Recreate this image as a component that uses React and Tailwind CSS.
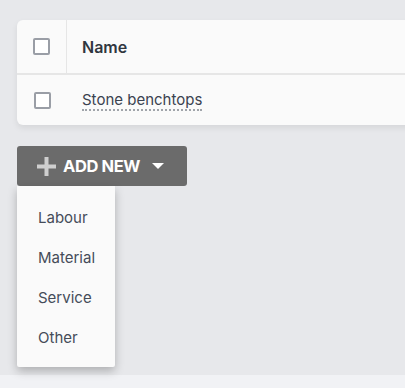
import React from 'react'

function Checkbox() {
  return <span className="block w-[17px] h-[17px] border-2 border-[#9a9ea6] rounded-[2px] bg-white" />
}

export default function App() {
  const items = ['Labour', 'Material', 'Service', 'Other']

  return (
    <div className="w-[405px] h-[388px] overflow-hidden bg-[#e7e8eb] flex flex-col font-['Inter',sans-serif]">
      <div className="flex-1 relative pl-[17px] pt-[20px]">
        {/* Table card */}
        <div className="w-[420px] bg-[#fafafa] rounded-l-[6px] shadow-[0_3px_6px_rgba(0,0,0,0.08)]">
          <div className="flex h-[55px] border-b-2 border-[#e6e6e6]">
            <div className="w-[50px] flex items-center justify-center border-r border-[#e6e6e6]">
              <Checkbox />
            </div>
            <div className="flex items-center pl-[15px] text-[16px] font-semibold text-[#30363f]">Name</div>
          </div>
          <div className="flex h-[50px]">
            <div className="w-[50px] flex items-center justify-center">
              <Checkbox />
            </div>
            <div className="flex items-center pl-[15px]">
              <span className="text-[15px] text-[#3a4250] border-b-2 border-dotted border-[#a0a4aa] leading-[19px]">
                Stone benchtops
              </span>
            </div>
          </div>
        </div>

        {/* Add new button + menu */}
        <div className="relative mt-[21px] w-[170px]">
          <button className="w-[170px] h-[40px] bg-[#6b6b6b] rounded-[3px] flex items-center pl-[20px] text-white">
            <svg width="19" height="19" viewBox="0 0 19 19" className="shrink-0">
              <rect x="7.5" y="0" width="4" height="19" fill="#cfcfcf" />
              <rect x="0" y="7.5" width="19" height="4" fill="#cfcfcf" />
            </svg>
            <span className="ml-[7px] text-[16.5px] font-bold tracking-[-0.4px]">ADD NEW</span>
            <svg width="12" height="6" viewBox="0 0 12 6" className="ml-[12px] shrink-0">
              <path d="M0 0 L12 0 L6 6 Z" fill="#ffffff" />
            </svg>
          </button>
          <div className="absolute left-0 top-[40px] w-[98px] bg-[#fafafa] pt-[12px] pb-[9px] shadow-[0_4px_10px_rgba(0,0,0,0.25)] rounded-b-[2px]">
            {items.map((it) => (
              <div key={it} className="h-[40px] flex items-center pl-[21px] text-[15px] text-[#454c59]">
                {it}
              </div>
            ))}
          </div>
        </div>
      </div>
      <div className="h-[13px] bg-[#f1f2f5]" />
    </div>
  )
}
